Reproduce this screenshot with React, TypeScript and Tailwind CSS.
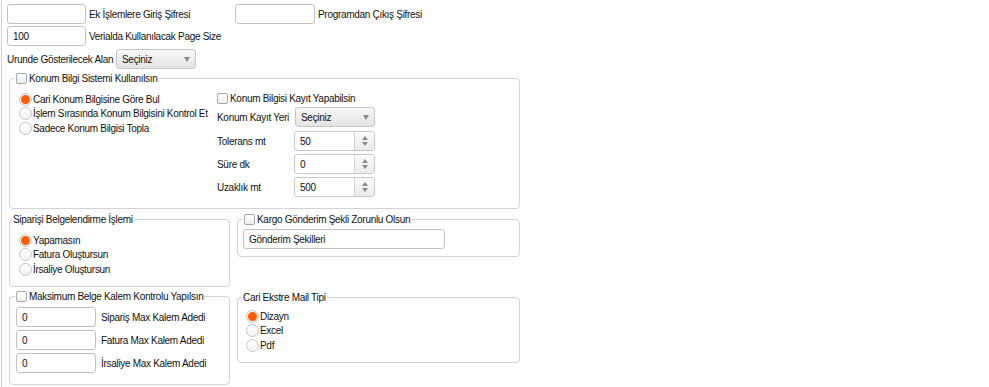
import React from "react";

const Check: React.FC = () => (
  <span className="inline-block w-[11px] h-[11px] rounded-[2px] border border-[#a9a9a9] bg-gradient-to-b from-white to-[#eeeeee] mr-[2px] shrink-0" />
);

const Radio: React.FC<{ label: string; checked?: boolean }> = ({ label, checked }) => (
  <div className="flex items-center h-[14.5px]">
    <span className="w-[13px] h-[13px] rounded-full border border-[#c4c4c4] bg-gradient-to-b from-white to-[#f3f3f3] flex items-center justify-center shrink-0">
      {checked && <span className="w-[9px] h-[9px] rounded-full bg-[#ff5c00]" />}
    </span>
    <span className="ml-px">{label}</span>
  </div>
);

const TextBox: React.FC<{ value?: string; className?: string }> = ({ value = "", className = "" }) => (
  <input
    readOnly
    value={value}
    className={`h-[20px] border border-[#c2c2c2] rounded-[3px] bg-white px-[5px] outline-none shrink-0 ${className}`}
  />
);

const Select: React.FC<{ className?: string }> = ({ className = "" }) => (
  <div
    className={`h-[20px] border border-[#c6c6c6] rounded-[3px] bg-gradient-to-b from-[#f8f8f8] to-[#e3e3e3] flex items-center justify-between pl-[5px] pr-[5px] shrink-0 ${className}`}
  >
    <span>Seçiniz</span>
    <svg width="6" height="5" viewBox="0 0 6 5">
      <path d="M0 0H6L3 5Z" fill="#8a8a8a" />
    </svg>
  </div>
);

const Spinner: React.FC<{ value: string }> = ({ value }) => (
  <div className="w-[81px] h-[20px] border border-[#c6c6c6] rounded-[3px] bg-white flex overflow-hidden">
    <span className="flex-1 pl-[5px] flex items-center">{value}</span>
    <span className="w-[20px] border-l border-[#d2d2d2] bg-gradient-to-b from-[#fbfbfb] to-[#ebebeb] flex flex-col items-center justify-center gap-[2px]">
      <svg width="6" height="4" viewBox="0 0 6 4">
        <path d="M0 4H6L3 0Z" fill="#8a8a8a" />
      </svg>
      <svg width="6" height="4" viewBox="0 0 6 4">
        <path d="M0 0H6L3 4Z" fill="#8a8a8a" />
      </svg>
    </span>
  </div>
);

const App: React.FC = () => {
  return (
    <div className="w-[989px] h-[387px] overflow-hidden bg-white text-[#111] text-[10px] leading-[13px] tracking-[-0.3px] whitespace-nowrap font-['Liberation_Sans',Arial,sans-serif]">
      <div className="ml-px h-full border-l border-[#cfcfcf] pl-[5px] pt-[4px]">
        <div className="flex items-center">
          <TextBox className="w-[79px]" />
          <span className="ml-[3px] w-[146px]">Ek İşlemlere Giriş Şifresi</span>
          <TextBox className="w-[80px]" />
          <span className="ml-[3px]">Programdan Çıkış Şifresi</span>
        </div>
        <div className="flex items-center mt-[2px]">
          <TextBox value="100" className="w-[79px]" />
          <span className="ml-[3px]">Verialda Kullanılacak Page Size</span>
        </div>
        <div className="flex items-center mt-[3px]">
          <span className="w-[109px]">Urunde Gösterilecek Alan</span>
          <Select className="w-[80px]" />
        </div>

        <fieldset className="ml-[2px] mt-[3px] w-[511px] h-[137px] border border-[#d3d3d3] rounded-[4px]">
          <legend className="ml-[5px] px-px flex items-center h-[13px]">
            <Check />
            <span>Konum Bilgi Sistemi Kullanılsın</span>
          </legend>
          <div className="flex">
            <div className="w-[207px] pl-[9px] pt-[7px]">
              <Radio label="Cari Konum Bilgisine Göre Bul" checked />
              <Radio label="İşlem Sırasında Konum Bilgisini Kontrol Et" />
              <Radio label="Sadece Konum Bilgisi Topla" />
            </div>
            <div className="pt-[6px]">
              <div className="flex items-center h-[14px]">
                <Check />
                <span>Konum Bilgisi Kayıt Yapabilsin</span>
              </div>
              <div className="flex items-center mt-[2px]">
                <span className="w-[78px]">Konum Kayıt Yeri</span>
                <Select className="w-[80px]" />
              </div>
              <div className="flex items-center mt-[4px]">
                <span className="w-[77px]">Tolerans mt</span>
                <Spinner value="50" />
              </div>
              <div className="flex items-center mt-[3px]">
                <span className="w-[77px]">Süre dk</span>
                <Spinner value="0" />
              </div>
              <div className="flex items-center mt-[3px]">
                <span className="w-[77px]">Uzaklık mt</span>
                <Spinner value="500" />
              </div>
            </div>
          </div>
        </fieldset>

        <div className="flex items-start mt-[4px] ml-[2px] gap-[7px]">
          <fieldset className="w-[221px] h-[74px] border border-[#d3d3d3] rounded-[4px]">
            <legend className="ml-[2px] px-px h-[13px] flex items-center">Siparişi Belgelendirme İşlemi</legend>
            <div className="pl-[9px] pt-[7px]">
              <Radio label="Yapamasın" checked />
              <Radio label="Fatura Oluştursun" />
              <Radio label="İrsaliye Oluştursun" />
            </div>
          </fieldset>
          <fieldset className="w-[283px] h-[44px] border border-[#d3d3d3] rounded-[4px]">
            <legend className="ml-[5px] px-px flex items-center h-[13px]">
              <Check />
              <span>Kargo Gönderim Şekli Zorunlu Olsun</span>
            </legend>
            <div className="pl-[5px] pt-[3px]">
              <TextBox value="Gönderim Şekilleri" className="w-[202px]" />
            </div>
          </fieldset>
        </div>

        <div className="flex items-start mt-[3px] ml-[2px] gap-[7px]">
          <fieldset className="w-[221px] h-[95px] border border-[#d3d3d3] rounded-[4px]">
            <legend className="ml-[5px] px-px flex items-center h-[13px]">
              <Check />
              <span>Maksimum Belge Kalem Kontrolu Yapılsın</span>
            </legend>
            <div className="pl-[6px] pt-[4px] flex flex-col gap-[3px]">
              <div className="flex items-center">
                <TextBox value="0" className="w-[80px]" />
                <span className="ml-[5px]">Sipariş Max Kalem Adedi</span>
              </div>
              <div className="flex items-center">
                <TextBox value="0" className="w-[80px]" />
                <span className="ml-[5px]">Fatura Max Kalem Adedi</span>
              </div>
              <div className="flex items-center">
                <TextBox value="0" className="w-[80px]" />
                <span className="ml-[5px]">İrsaliye Max Kalem Adedi</span>
              </div>
            </div>
          </fieldset>
          <fieldset className="mt-px w-[283px] h-[72px] border border-[#d3d3d3] rounded-[4px]">
            <legend className="ml-[4px] px-px h-[13px] flex items-center">Cari Ekstre Mail Tipi</legend>
            <div className="pl-[8px] pt-[5px]">
              <Radio label="Dizayn" checked />
              <Radio label="Excel" />
              <Radio label="Pdf" />
            </div>
          </fieldset>
        </div>
      </div>
    </div>
  );
};

export default App;
